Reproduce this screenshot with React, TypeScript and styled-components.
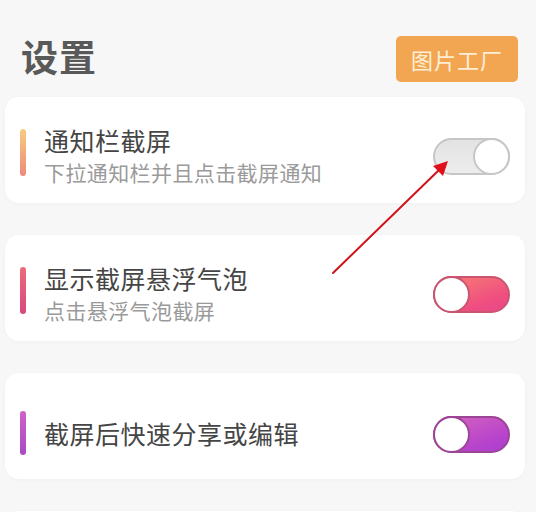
import React, { useState } from 'react';
import styled, { createGlobalStyle } from 'styled-components';

type Tone = 'gray' | 'pink' | 'purple';

interface SettingItem {
  id: string;
  title: string;
  subtitle?: string;
  bar: string;
  tone: Tone;
  on: boolean;
}

const GlobalStyle = createGlobalStyle`
  html, body {
    margin: 0;
    padding: 0;
    background: #f7f7f7;
  }
  body {
    font-family: "Noto Sans CJK SC", "Noto Sans", sans-serif;
  }
`;

const Page = styled.div`
  position: relative;
  width: 536px;
  height: 512px;
  overflow: hidden;
  background: #f7f7f7;
`;

const Header = styled.div`
  display: flex;
  align-items: center;
  justify-content: space-between;
  padding: 36px 18px 0 21px;
  height: 46px;
`;

const Title = styled.h1`
  margin: -6px 0 0;
  font-size: 37px;
  font-weight: 700;
  line-height: 1;
  color: #595959;
  letter-spacing: 1px;
`;

const FactoryButton = styled.button`
  width: 122px;
  height: 46px;
  border: none;
  border-radius: 5px;
  background: #f3a651;
  color: #fdeed6;
  font-family: inherit;
  font-size: 22px;
  letter-spacing: 1px;
  cursor: pointer;
`;

const List = styled.div`
  display: flex;
  flex-direction: column;
  gap: 32px;
  margin: 15px 11px 0 5px;
`;

const Card = styled.div<{ $single: boolean }>`
  box-sizing: border-box;
  height: 106px;
  display: flex;
  align-items: center;
  padding: ${({ $single }) => ($single ? 14 : 10)}px 15px 0 15px;
  background: #ffffff;
  border-radius: 14px;
  box-shadow: 0 1px 4px rgba(0, 0, 0, 0.03);
`;

const Bar = styled.div<{ $bg: string; $single: boolean }>`
  flex: none;
  width: 6px;
  height: ${({ $single }) => ($single ? 44 : 47)}px;
  margin-bottom: ${({ $single }) => ($single ? 0 : 5)}px;
  border-radius: 3px;
  background: ${({ $bg }) => $bg};
`;

const Texts = styled.div`
  flex: 1;
  display: flex;
  flex-direction: column;
  margin-left: 18px;
`;

const ItemTitle = styled.div`
  font-size: 25px;
  line-height: 30px;
  letter-spacing: 0.5px;
  color: #454545;
`;

const ItemSub = styled.div`
  margin-top: 4px;
  font-size: 21px;
  line-height: 26px;
  letter-spacing: 0.4px;
  color: #9a9a9a;
`;

const tones: Record<Tone, { track: string; border: string }> = {
  gray: {
    track: 'linear-gradient(180deg, #e3e3e3, #ededed)',
    border: '#c6c6c6',
  },
  pink: {
    track: 'linear-gradient(160deg, #f97f73 0%, #ef4f80 70%, #e8468a 100%)',
    border: '#c95671',
  },
  purple: {
    track: 'linear-gradient(160deg, #d565bd 0%, #b844cc 70%, #a93fd0 100%)',
    border: '#9c4596',
  },
};

const Track = styled.button<{ $tone: Tone }>`
  position: relative;
  flex: none;
  box-sizing: border-box;
  width: 77px;
  height: 37px;
  margin: 2px 0 0;
  padding: 0;
  border-radius: 19px;
  border: 2px solid ${({ $tone }) => tones[$tone].border};
  background: ${({ $tone }) => tones[$tone].track};
  cursor: pointer;
`;

const Knob = styled.span<{ $tone: Tone; $on: boolean }>`
  position: absolute;
  top: -2px;
  ${({ $on }) => ($on ? 'right: -2px;' : 'left: -2px;')}
  box-sizing: border-box;
  width: 37px;
  height: 37px;
  border-radius: 50%;
  background: #ffffff;
  border: 2px solid ${({ $tone }) => tones[$tone].border};
`;

const ArrowLayer = styled.svg`
  position: absolute;
  left: 0;
  top: 0;
  pointer-events: none;
`;

const items: SettingItem[] = [
  {
    id: 'notify',
    title: '通知栏截屏',
    subtitle: '下拉通知栏并且点击截屏通知',
    bar: 'linear-gradient(180deg, #f6cd80, #ec8a7c)',
    tone: 'gray',
    on: true,
  },
  {
    id: 'bubble',
    title: '显示截屏悬浮气泡',
    subtitle: '点击悬浮气泡截屏',
    bar: 'linear-gradient(180deg, #ea6a7a, #d9487f)',
    tone: 'pink',
    on: false,
  },
  {
    id: 'share',
    title: '截屏后快速分享或编辑',
    bar: 'linear-gradient(180deg, #cf62c6, #a84ac4)',
    tone: 'purple',
    on: false,
  },
  {
    id: 'sound',
    title: '截屏提示音',
    bar: 'linear-gradient(180deg, #9a6ad8, #6d5ad4)',
    tone: 'gray',
    on: true,
  },
];

const Toggle: React.FC<{ tone: Tone; on: boolean; onToggle: () => void }> = ({ tone, on, onToggle }) => (
  <Track type="button" $tone={tone} onClick={onToggle} aria-pressed={on}>
    <Knob $tone={tone} $on={on} />
  </Track>
);

const App: React.FC = () => {
  const [state, setState] = useState<Record<string, boolean>>(
    Object.fromEntries(items.map((i) => [i.id, i.on]))
  );

  return (
    <Page>
      <GlobalStyle />
      <Header>
        <Title>设置</Title>
        <FactoryButton type="button">图片工厂</FactoryButton>
      </Header>
      <List>
        {items.map((item) => (
          <Card key={item.id} $single={!item.subtitle}>
            <Bar $bg={item.bar} $single={!item.subtitle} />
            <Texts>
              <ItemTitle>{item.title}</ItemTitle>
              {item.subtitle && <ItemSub>{item.subtitle}</ItemSub>}
            </Texts>
            <Toggle
              tone={item.tone}
              on={state[item.id]}
              onToggle={() => setState((s) => ({ ...s, [item.id]: !s[item.id] }))}
            />
          </Card>
        ))}
      </List>
      {/* red annotation arrow pointing at the first toggle */}
      <ArrowLayer width="536" height="512" viewBox="0 0 536 512">
        <line x1="333" y1="273" x2="440" y2="169" stroke="#d0121b" strokeWidth="2" strokeLinecap="round" />
        <polygon points="448,161 433,166 443,176" fill="#e0101a" />
      </ArrowLayer>
    </Page>
  );
};

export default App;
